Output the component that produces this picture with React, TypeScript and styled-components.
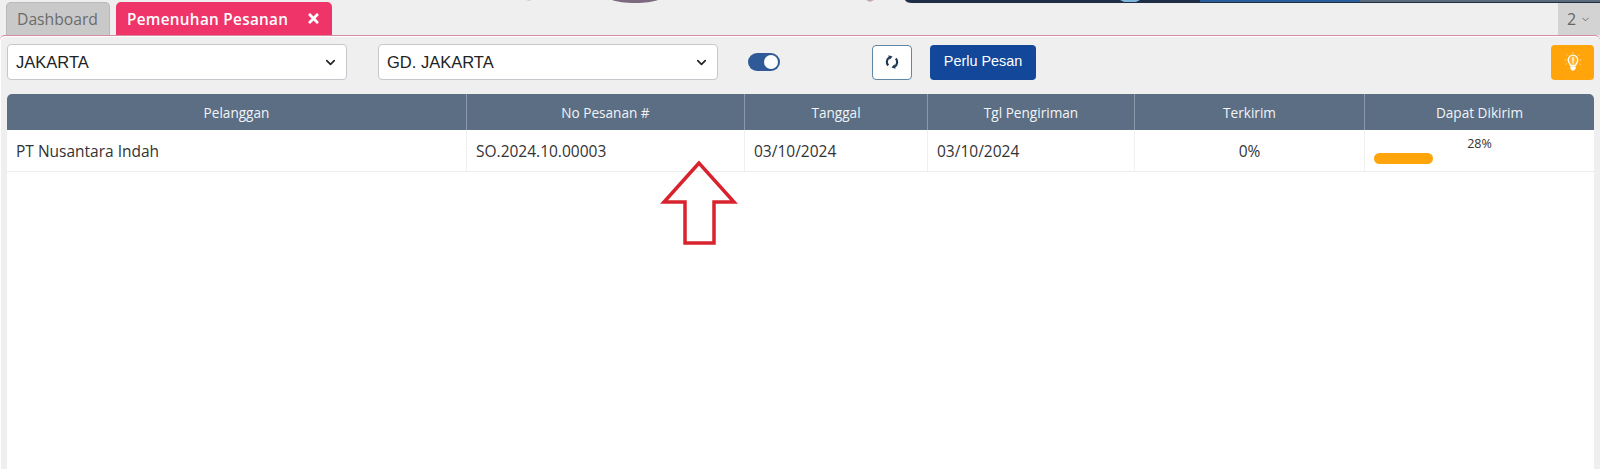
import React from "react"
import styled, { createGlobalStyle } from "styled-components"
import { FaTimes } from "react-icons/fa"
import { FiChevronDown } from "react-icons/fi"

const columns = ["Pelanggan", "No Pesanan #", "Tanggal", "Tgl Pengiriman", "Terkirim", "Dapat Dikirim"]

const GlobalStyle = createGlobalStyle`
  html, body {
    margin: 0;
    height: 100%;
    overflow: hidden;
    background: #efefef;
    font-family: "Open Sans", "Liberation Sans", sans-serif;
  }
`

const Page = styled.div`
  position: relative;
  display: flex;
  flex-direction: column;
  height: 469px;
  width: 1600px;
  overflow: hidden;
`

const BannerEdge = styled.svg`
  position: absolute;
  top: 0;
  left: 0;
`

const TabBar = styled.div`
  display: flex;
  align-items: flex-end;
  height: 35px;
  padding: 3px 0 0 6px;
  box-sizing: border-box;
  gap: 6px;
`

const Tab = styled.div<{ $active?: boolean }>`
  display: flex;
  align-items: center;
  justify-content: space-between;
  box-sizing: border-box;
  height: 33px;
  border-radius: 5px 5px 0 0;
  ${(p) =>
    p.$active
      ? `width: 216px; padding: 0 11px; background: #ee3469; color: #fff; font-weight: 600; font-size: 15.3px; letter-spacing: 0.3px;`
      : `width: 104px; padding: 0 10px; background: #c9c9c9; color: #6b6b6b; border: 1px solid #b9b9b9; border-bottom: 0; font-size: 15.7px;`}
`

const PageCount = styled.div`
  margin-left: auto;
  display: flex;
  align-items: center;
  justify-content: center;
  gap: 4px;
  align-self: flex-end;
  width: 42px;
  height: 32px;
  background: #d3d3d3;
  color: #666;
  font-size: 16px;
`

const Panel = styled.div`
  flex: 1;
  display: flex;
  flex-direction: column;
  min-height: 0;
  padding: 0 6px 0 7px;
  border-top: 1px solid #d88aa0;
  border-radius: 5px 5px 0 0;
  box-shadow: inset 1px 1px 0 #fff;
`

const Toolbar = styled.div`
  display: flex;
  align-items: center;
  box-sizing: border-box;
  height: 58px;
  padding: 8px 0 14px;
  flex-shrink: 0;
`

const SelectBox = styled.div<{ $width: number; $gap: number }>`
  display: flex;
  align-items: center;
  justify-content: space-between;
  box-sizing: border-box;
  width: ${(p) => p.$width}px;
  height: 36px;
  margin-right: ${(p) => p.$gap}px;
  padding: 0 8px;
  background: #fff;
  border: 1px solid #c4c8cc;
  border-radius: 4px;
  color: #222;
  font-family: "Liberation Sans", Arial, sans-serif;
  font-size: 16.5px;
`

const Toggle = styled.div`
  display: flex;
  justify-content: flex-end;
  align-items: center;
  box-sizing: border-box;
  width: 32px;
  height: 18px;
  padding: 2px;
  margin-right: 92px;
  border-radius: 9px;
  background: #2f5a97;
`

const Knob = styled.div`
  width: 14px;
  height: 14px;
  border-radius: 50%;
  background: #fff;
`

const RefreshButton = styled.div`
  display: flex;
  align-items: center;
  justify-content: center;
  box-sizing: border-box;
  width: 40px;
  height: 35px;
  margin-right: 18px;
  background: #fff;
  border: 1px solid #5f88a8;
  border-radius: 4px;
`

const PrimaryButton = styled.div`
  display: flex;
  align-items: center;
  justify-content: center;
  width: 106px;
  height: 35px;
  padding-bottom: 2px;
  box-sizing: border-box;
  background: #12479a;
  border-radius: 4px;
  color: #fff;
  font-family: "Liberation Sans", Arial, sans-serif;
  font-size: 14.4px;
`

const HintButton = styled.div`
  display: flex;
  align-items: center;
  justify-content: center;
  width: 43px;
  height: 35px;
  margin-left: auto;
  background: #ffa40a;
  border-radius: 4px;
`

const Table = styled.div`
  flex: 1;
  background: #fff;
  border-radius: 5px 5px 0 0;
`

const Row = styled.div<{ $head?: boolean }>`
  display: grid;
  grid-template-columns: 459px 278px 183px 207px 230px 1fr;
  height: ${(p) => (p.$head ? "36px" : "42px")};
  box-sizing: border-box;
  ${(p) => (p.$head ? `background: #5b6e84; border-radius: 5px 5px 0 0;` : `border-bottom: 1px solid #ececec;`)}
`

const HeadCell = styled.div`
  display: flex;
  align-items: center;
  justify-content: center;
  color: #f2f4f6;
  font-size: 13.6px;
  border-left: 1px solid #8b9aaa;
  &:first-child {
    border-left: 0;
  }
`

const Cell = styled.div<{ $center?: boolean }>`
  display: flex;
  align-items: center;
  justify-content: ${(p) => (p.$center ? "center" : "flex-start")};
  padding: 0 9px;
  color: #333;
  font-size: 15.5px;
  border-left: 1px solid #f0f0f0;
  &:first-child {
    border-left: 0;
  }
`

const ProgressCell = styled.div`
  padding: 6px 9px 0;
  border-left: 1px solid #f0f0f0;
  color: #333;
  font-size: 12.5px;
  line-height: 16px;
`

const ProgressLabel = styled.div`
  text-align: center;
`

const ProgressTrack = styled.div`
  height: 11px;
  margin-top: 1px;
  border-radius: 6px;
  background: transparent;
`

const ProgressBar = styled.div`
  height: 100%;
  border-radius: 6px;
  background: #ffa40a;
`

const Arrow = styled.svg`
  position: absolute;
  left: 660px;
  top: 160px;
`

function RefreshIcon() {
  return (
    <svg width="16" height="16" viewBox="0 0 16 16" fill="none">
      <path d="M5.4 3.4A5.2 5.2 0 0 0 4.2 11.4" stroke="#223a55" strokeWidth="2.2" />
      <path d="M10.6 12.6A5.2 5.2 0 0 0 11.8 4.6" stroke="#223a55" strokeWidth="2.2" />
      <path d="M4.4 1.2 8.6 2.6 5.6 5.8Z M11.6 14.8 7.4 13.4 10.4 10.2Z" fill="#223a55" />
    </svg>
  )
}

function BulbIcon() {
  return (
    <svg width="20" height="22" viewBox="0 0 20 22" fill="none" stroke="#fff">
      <path
        d="M7.4 14.4C7 12.6 5.2 11.6 5.2 9a4.8 4.8 0 0 1 9.6 0c0 2.6-1.8 3.6-2.2 5.4Z"
        fill="#ffb52e"
        strokeWidth="1.3"
      />
      <path d="M10 6.2v4.2M10 11.2v1.2" strokeWidth="1.4" />
      <path d="M7.6 15.6h4.8v2l-1.2 1.6H8.8l-1.2-1.6Z" fill="#fff" strokeWidth="0.5" />
      <path
        d="M1.6 9h1.6M16.8 9h1.6M3.6 3.4l1.1 1.1M16.4 3.4l-1.1 1.1M10 1v1.4M2.6 13.4l1.2-.7M17.4 13.4l-1.2-.7"
        strokeWidth="0.9"
        opacity="0.75"
      />
    </svg>
  )
}

export default function App() {
  return (
    <Page>
      <GlobalStyle />
      <TabBar>
        <Tab>Dashboard</Tab>
        <Tab $active>
          Pemenuhan Pesanan
          <FaTimes size={15} />
        </Tab>
        <PageCount>
          2
          <FiChevronDown size={11} />
        </PageCount>
      </TabBar>
      <Panel>
        <Toolbar>
          <SelectBox $width={340} $gap={31}>
            JAKARTA
            <FiChevronDown size={15} strokeWidth={2.6} />
          </SelectBox>
          <SelectBox $width={340} $gap={30}>
            GD. JAKARTA
            <FiChevronDown size={15} strokeWidth={2.6} />
          </SelectBox>
          <Toggle>
            <Knob />
          </Toggle>
          <RefreshButton>
            <RefreshIcon />
          </RefreshButton>
          <PrimaryButton>Perlu Pesan</PrimaryButton>
          <HintButton>
            <BulbIcon />
          </HintButton>
        </Toolbar>
        <Table>
          <Row $head>
            {columns.map((c) => (
              <HeadCell key={c}>{c}</HeadCell>
            ))}
          </Row>
          <Row>
            <Cell>PT Nusantara Indah</Cell>
            <Cell>SO.2024.10.00003</Cell>
            <Cell>03/10/2024</Cell>
            <Cell>03/10/2024</Cell>
            <Cell $center>0%</Cell>
            <ProgressCell>
              <ProgressLabel>28%</ProgressLabel>
              <ProgressTrack>
                <ProgressBar style={{ width: "28%" }} />
              </ProgressTrack>
            </ProgressCell>
          </Row>
        </Table>
      </Panel>
      <BannerEdge width="1600" height="3" viewBox="0 0 1600 3">
        <path d="M526 0h6l-3 1Z" fill="#d8cfc0" />
        <path d="M612 0h46c-6 2-12 3-23 3s-17-1-23-3Z" fill="#7d6a80" />
        <path d="M866 0h8l-4 2Z" fill="#c9a6b0" />
        <path d="M905 0h695v3H912c-4 0-6-1-7-3Z" fill="#1e2f45" />
        <path d="M1120 0h20l-4 2h-12Z" fill="#7fb6dc" />
        <path d="M1200 0h300v2h-300Z" fill="#2a5f9e" />
        <path d="M1360 0h240v2h-240Z" fill="#5a6b7c" />
      </BannerEdge>
      <Arrow width="78" height="88" viewBox="0 0 78 88" fill="none">
        <path d="M39 3 4 42h21v41h29V42h20Z" stroke="#d8232e" strokeWidth="3.5" />
      </Arrow>
    </Page>
  )
}
